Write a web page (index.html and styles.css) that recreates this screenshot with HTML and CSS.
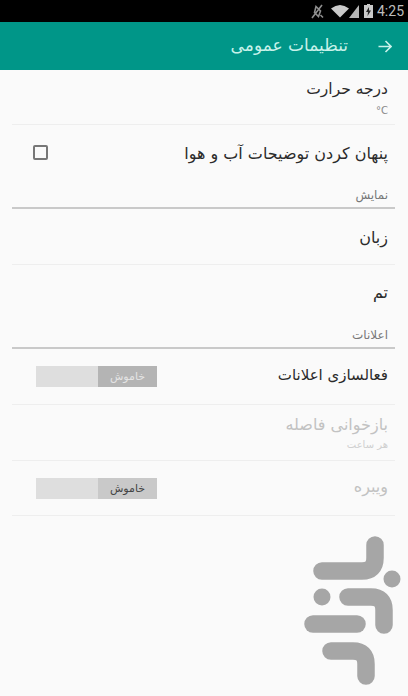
FILE: index.html
```
<!DOCTYPE html>
<html lang="fa">
<head>
<meta charset="utf-8">
<title>تنظیمات عمومی</title>
<link rel="stylesheet" href="styles.css">
</head>
<body>
<div class="status">
  <svg class="st-icon mute" width="13" height="15" viewBox="0 0 13 15"><path d="M1 14 L11 1 M5 2.5 L9.5 7 L7.5 12.5 L3.5 8.5 Z M9.5 11 L12 13.5" fill="none" stroke="#8f8f8f" stroke-width="1.6"/></svg>
  <svg class="st-icon wifi" width="18" height="14" viewBox="0 0 18 14"><path d="M0 4.5 Q9 -2.5 18 4.5 L9 13.5 Z" fill="#c9c9c9"/></svg>
  <svg class="st-icon signal" width="10" height="14" viewBox="0 0 10 14"><path d="M10 1 V14 H0 Z" fill="#b5b5b5"/></svg>
  <svg class="st-icon battery" width="9" height="14" viewBox="0 0 9 14"><path d="M3 0 H6 V1 H9 V14 H0 V1 H3 Z" fill="#c9c9c9"/><path d="M5 3 L2 8 H4 L3.5 12 L7 6.5 H5 Z" fill="#222"/></svg>
  <span class="clock">4:25</span>
</div>
<header class="bar">
  <svg class="back" width="14" height="13" viewBox="0 0 14 13"><path d="M0.5 6.5 H13 M7.5 1 L13 6.5 L7.5 12" fill="none" stroke="#c8f2ea" stroke-width="1.6"/></svg>
  <h1 class="bar-title">تنظیمات عمومی</h1>
</header>
<main class="list" dir="rtl">
  <div class="row top">
    <div class="texts"><div class="title mid high">درجه حرارت</div><div class="sub latin">°C</div></div>
  </div>
  <div class="row last">
    <div class="title low">پنهان کردن توضیحات آب و هوا</div>
    <span class="check"></span>
  </div>
  <div class="section">نمایش</div>
  <div class="row"><div class="title big low">زبان</div></div>
  <div class="row last"><div class="title big">تم</div></div>
  <div class="section">اعلانات</div>
  <div class="row">
    <div class="title small raise">فعالسازی اعلانات</div>
    <div class="toggle"><span class="knob dim">خاموش</span><span class="track"></span></div>
  </div>
  <div class="row disabled">
    <div class="texts"><div class="title lift">بازخوانی فاصله</div><div class="sub">هر ساعت</div></div>
  </div>
  <div class="row disabled end">
    <div class="title raise">ویبره</div>
    <div class="toggle"><span class="knob">خاموش</span><span class="track"></span></div>
  </div>
</main>
<svg class="logo" width="118" height="171" viewBox="290 525 118 171" fill="none" stroke="#a6a6a6" stroke-width="17.5" stroke-linecap="round" stroke-linejoin="round">
  <path d="M375 545 V558 Q375 571 362 571 H322"/>
  <path d="M348 597 H371 Q384 597 384 610 V625"/>
  <path d="M313 624 H357"/>
  <path d="M331 651 H353 Q366 651 366 664 V676"/>
  <circle cx="392" cy="579" r="8.5" fill="#a6a6a6" stroke="none"/>
  <circle cx="322" cy="597" r="8.5" fill="#a6a6a6" stroke="none"/>
</svg>
</body>
</html>
```
FILE: styles.css
```
* { box-sizing: border-box; }
html, body { margin: 0; padding: 0; }
body {
  position: relative;
  width: 408px;
  height: 696px;
  overflow: hidden;
  background: #fafafa;
  font-family: "DejaVu Sans", "Noto Sans", sans-serif;
}
.status {
  height: 22px;
  background: #000;
  display: flex;
  align-items: center;
  justify-content: flex-end;
  padding-right: 4px;
}
.mute { margin-right: 7px; }
.wifi { margin-right: 0; }
.signal { margin-right: 5px; }
.battery { margin-right: 4px; }
.clock {
  font-family: Roboto, sans-serif;
  font-size: 14px;
  color: #bdbdbd;
}
.bar {
  height: 48px;
  background: #009688;
  display: flex;
  align-items: center;
  justify-content: flex-start;
  flex-direction: row-reverse;
  padding-right: 16px;
  gap: 30px;
}
.bar-title {
  margin: 0 0 3px;
  font-size: 17px;
  font-weight: normal;
  color: #c8f2ea;
  direction: rtl;
}
.list { padding: 0 13px 0 12px; }
.row {
  height: 56px;
  display: flex;
  align-items: center;
  justify-content: space-between;
  padding: 0 7px 0 24px;
  border-bottom: 1px solid #eeeeee;
}
.row.top { height: 55px; }
.row.last { height: 55px; border-bottom: 0; }
.row.end { height: 55px; }
.title { font-size: 16px; color: #2b2b2b; line-height: 22px; }
.title.mid { font-size: 15.5px; }
.title.small { font-size: 15px; }
.title.big { font-size: 16px; }
.title.high { margin-bottom: 5px; }
.title.lift { margin-bottom: 3px; }
.title.raise { margin-bottom: 3px; }
.title.low { margin-top: 2px; }
.sub { font-size: 10px; color: #888; line-height: 12px; }
.sub.latin { direction: ltr; text-align: right; }
.check {
  width: 15px;
  height: 15px;
  border: 2px solid #777;
  border-radius: 2px;
  margin-left: -3px;
}
.section {
  height: 29px;
  padding: 7px 7px 0;
  font-size: 12px;
  color: #777;
  line-height: 16px;
  border-bottom: 2px solid #c9c9c9;
}
.toggle {
  width: 121px;
  height: 21px;
  display: flex;
}
.knob {
  width: 59px;
  background: #c9c9c9;
  font-size: 11px;
  line-height: 21px;
  color: #444;
  text-align: center;
}
.knob.dim { background: #b4b4b4; color: #e4e4e4; }
.track { flex: 1; background: #dedede; }
.disabled .title { color: #c2c2c2; }
.disabled .sub { color: #d0d0d0; }
.logo { position: absolute; left: 290px; top: 525px; }
```
